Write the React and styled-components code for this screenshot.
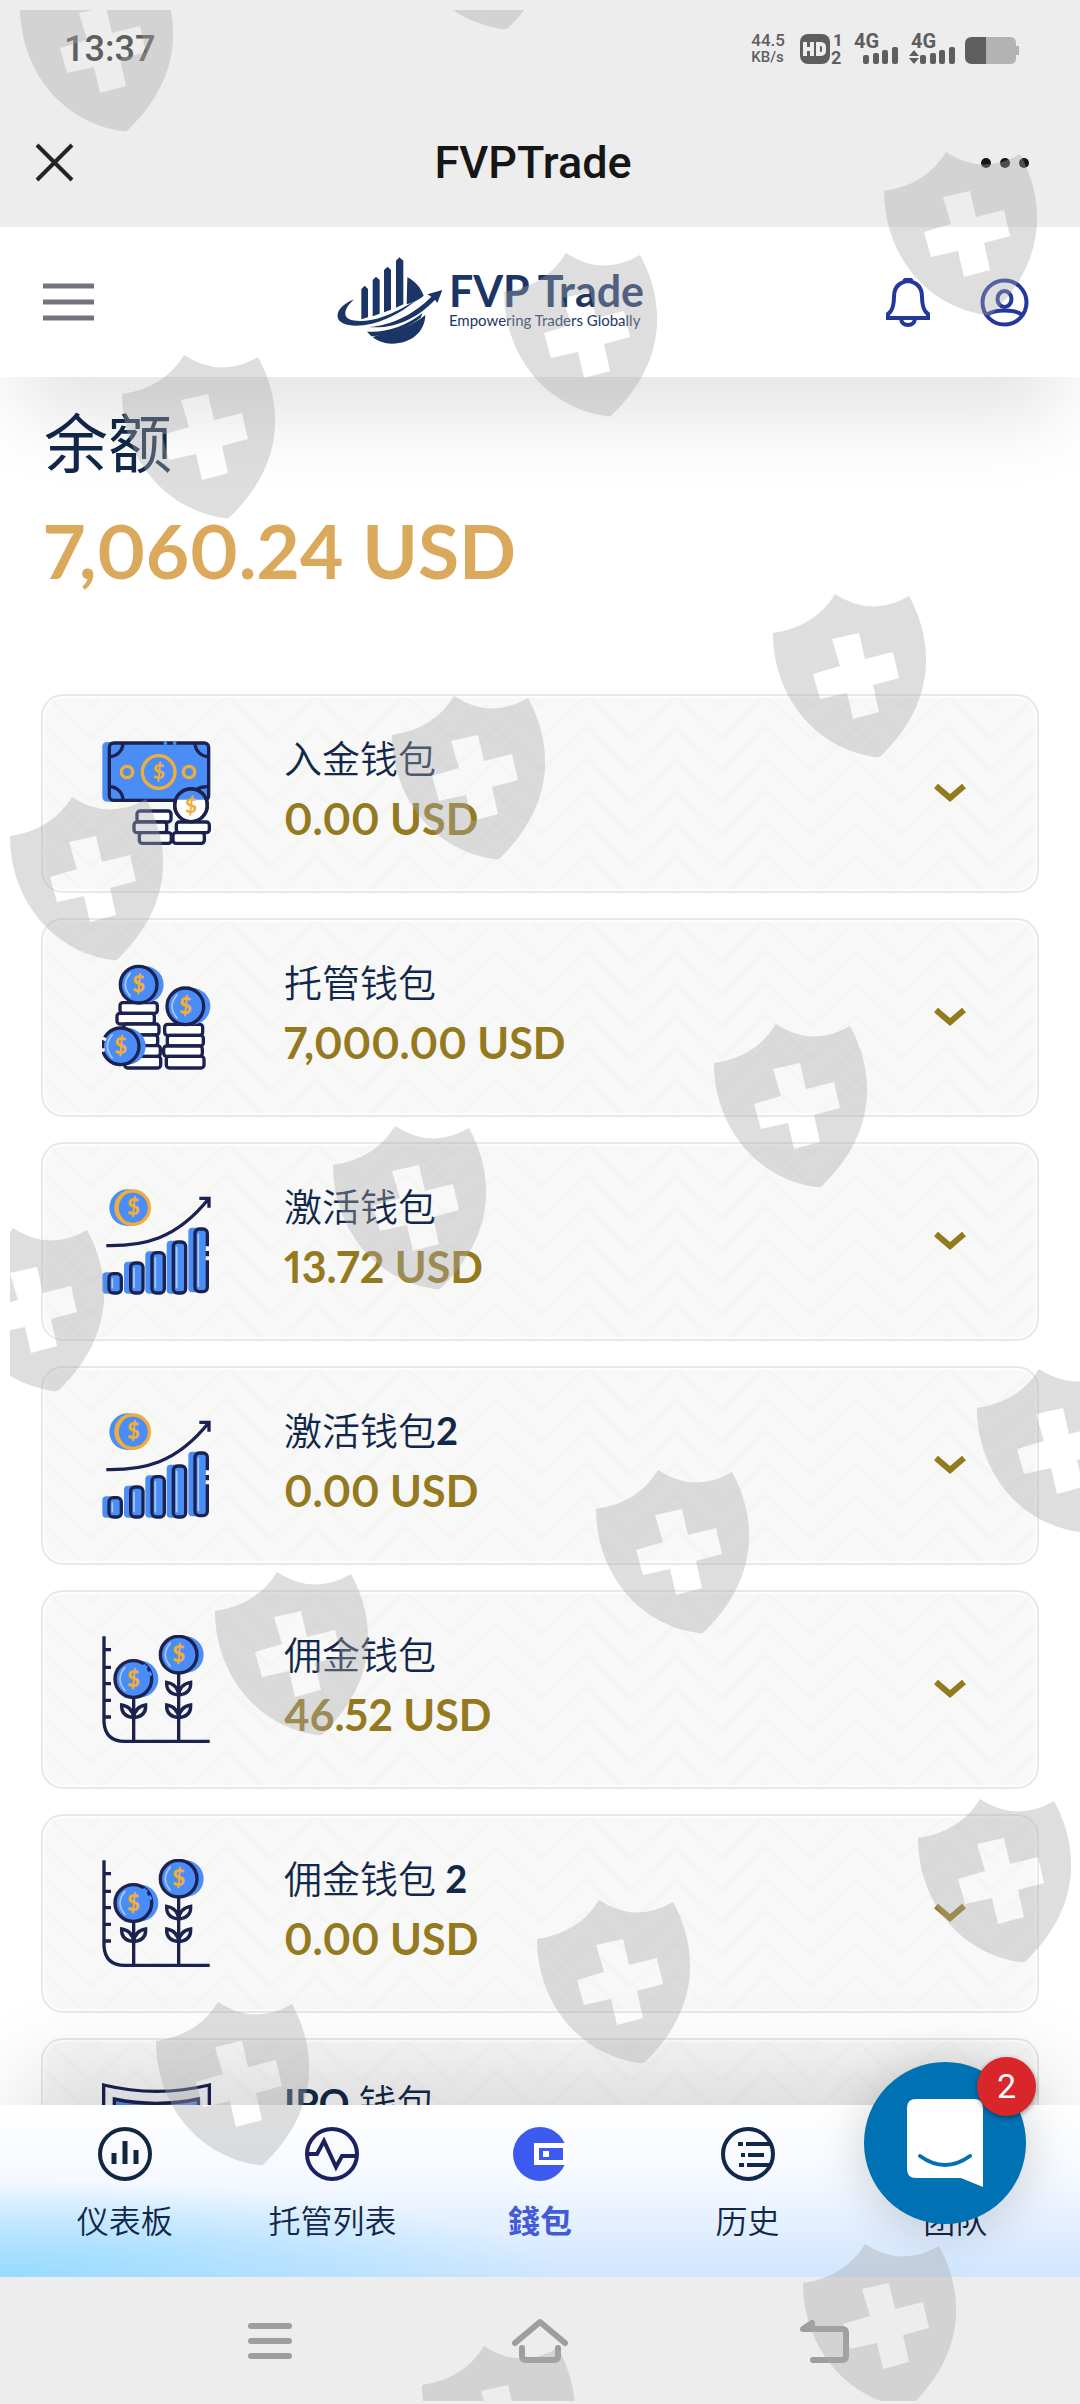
import { useState } from "react";
import styled, { createGlobalStyle, css } from "styled-components";

const NAVY = "#12284a";
const INK = "#1b2250";
const BLUE = "#4b8df6";
const AMBER = "#efae3c";
const GOLD = "#95791f";
const CJK = `"Noto Sans CJK SC", sans-serif`;

const GlobalStyle = createGlobalStyle`
  * {
    box-sizing: border-box;
  }
  body {
    margin: 0;
    background: #fff;
    font-family: "Lato", ${CJK};
    color: ${NAVY};
  }
  button {
    border: 0;
    padding: 0;
    background: none;
    font: inherit;
    color: inherit;
    cursor: pointer;
  }
  svg {
    display: block;
  }
`;

const Page = styled.div`
  position: relative;
  display: flex;
  flex-direction: column;
  height: 100vh;
  overflow: hidden;
`;

/* phone status bar and in-app browser title */

const StatusBar = styled.div`
  display: flex;
  justify-content: space-between;
  align-items: center;
  height: 98px;
  padding: 0 61px 0 64px;
  background: #ededed;
  color: #5e5e5e;
  font-family: "Roboto", sans-serif;
  font-weight: 500;
`;

const Clock = styled.time`
  font-size: 36px;
`;

const StatusIcons = styled.div`
  display: flex;
  align-items: center;
  gap: 14px;
`;

const Speed = styled.div`
  display: flex;
  flex-direction: column;
  font-size: 17px;
  line-height: 17px;
  small {
    font-size: 15px;
  }
`;

const TitleBar = styled.div`
  display: grid;
  grid-template-columns: 1fr auto 1fr;
  align-items: center;
  height: 129px;
  padding: 0 48px 0 34px;
  background: #ededed;
  color: #161616;
  font-family: "Roboto", sans-serif;
`;

const Title = styled.h1`
  margin: 0;
  font-size: 45px;
  font-weight: 500;
`;

const MoreButton = styled.button`
  justify-self: end;
`;

/* site header */

const Header = styled.header`
  position: relative;
  z-index: 2;
  display: flex;
  justify-content: space-between;
  align-items: center;
  height: 150px;
  flex-shrink: 0;
  padding: 0 51px 0 43px;
  background: #fff;
  box-shadow: 0 60px 80px -20px rgba(0, 0, 0, 0.11);
`;

const Brand = styled.a`
  display: flex;
  align-items: center;
  gap: 6px;
  padding-bottom: 4px;
  color: #1b3666;
  text-decoration: none;
`;

const BrandText = styled.span`
  display: flex;
  flex-direction: column;
  font-weight: 700;
  font-size: 43px;
  line-height: 40px;
  small {
    font-size: 15px;
    font-weight: 400;
    line-height: 18px;
  }
`;

const HeaderActions = styled.div`
  display: flex;
  gap: 50px;
`;

/* wallets */

const Main = styled.main`
  flex: 1;
  min-height: 0;
  overflow: hidden;
  padding: 24px 41px 0;
`;

const Balance = styled.section`
  padding: 0 3px;
  margin-bottom: 96px;
`;

const BalanceLabel = styled.h2`
  margin: 0;
  font-size: 64px;
  font-weight: 400;
  line-height: 84px;
`;

const BalanceAmount = styled.p`
  margin: 0;
  padding-top: 18px;
  font-size: 75px;
  font-weight: 700;
  font-variant-numeric: proportional-nums;
  line-height: 95px;
  color: #dba95c;
`;

const WalletList = styled.ul`
  display: flex;
  flex-direction: column;
  gap: 25px;
  margin: 0;
  padding: 0;
  list-style: none;
`;

const zigzag = encodeURIComponent(
  `<svg xmlns="http://www.w3.org/2000/svg" width="90" height="32"><g fill="none" stroke="#f5f5f1" stroke-width="4"><path d="M0 -22L45 -64L90 -22M0 10L45 -32L90 10M0 42L45 0L90 42M0 74L45 32L90 74"/></g></svg>`
);

const WalletCard = styled.button`
  display: flex;
  align-items: center;
  width: 100%;
  height: 199px;
  padding: 0 71px 0 59px;
  border: 2px solid #e8e8e8;
  border-radius: 22px;
  background: #f8f8f8 url("data:image/svg+xml,${zigzag}") 48px 0;
  box-shadow: inset 0 0 0 2px #fdfdfd;
  text-align: left;
`;

const WalletText = styled.span`
  flex: 1;
  display: flex;
  flex-direction: column;
  margin-left: 73px;
  padding-bottom: 10px;
`;

const WalletName = styled.span`
  font-size: 38px;
  line-height: 60px;
  font-weight: 350;
  b {
    font-weight: 700;
  }
`;

const WalletAmount = styled.span`
  font-size: 43px;
  font-weight: 700;
  line-height: 62px;
  font-variant-numeric: proportional-nums;
  color: ${GOLD};
`;

/* bottom bars */

const TabBar = styled.nav`
  position: relative;
  z-index: 2;
  display: flex;
  flex-shrink: 0;
  height: 172px;
  padding: 22px 21px 0;
  background:
    radial-gradient(ellipse 560px 96px at 0 100%, #97dbff, rgba(151, 219, 255, 0)),
    linear-gradient(#fff 0%, #f4f8ff 45%, #cfe6ff 100%);
  box-shadow: 0 -60px 80px -20px rgba(0, 0, 0, 0.11);
`;

const Tab = styled.a`
  flex: 1;
  display: flex;
  flex-direction: column;
  align-items: center;
  gap: 16px;
  font-size: 32px;
  line-height: 48px;
  font-weight: 350;
  color: ${NAVY};
  text-decoration: none;
  ${(props) =>
    props.$active &&
    css`
      font-weight: 700;
      color: #435bd6;
    `}
`;

const SystemBar = styled.div`
  display: grid;
  grid-template-columns: repeat(3, 1fr);
  flex-shrink: 0;
  align-items: center;
  justify-items: center;
  height: 127px;
  padding: 0 135px;
  background: #ededed;
`;

const ChatButton = styled.button`
  position: absolute;
  z-index: 3;
  right: 54px;
  bottom: 180px;
  width: 162px;
  height: 162px;
  border-radius: 50%;
  background: #0071b2;
  display: grid;
  place-items: center;
  box-shadow: 0 6px 50px rgba(0, 0, 0, 0.18);
`;

const ChatBadge = styled.span`
  position: absolute;
  top: -5px;
  right: -10px;
  width: 59px;
  height: 59px;
  border-radius: 50%;
  background: #d8262a;
  color: #fff;
  font-family: "Roboto", sans-serif;
  font-size: 34px;
  line-height: 59px;
  text-align: center;
  box-shadow: 0 2px 5px rgba(0, 0, 0, 0.4);
`;

const ShieldLayer = styled.div`
  position: absolute;
  z-index: 4;
  inset: 10px 0 3px 10px;
  overflow: hidden;
  pointer-events: none;
`;

/* drawings */

const SHIELDS = [
  [82, -32], [462, -134], [946, 152], [566, 253], [184, 355],
  [835, 594], [454, 696], [72, 797], [776, 1024], [395, 1126],
  [13, 1228], [1039, 1369], [658, 1470], [277, 1572], [980, 1799],
  [599, 1900], [218, 2002], [865, 2244], [484, 2346],
];

const SHIELD_PATH =
  "M0 0Q36 24 74 2C96 42 106 104 46 162Q44 164 40 163C-22 154 -62 100 -62 39Q-20 33 0 0Z" +
  "M-3 45L5 72L-22 80L-15 105L12 99L18 125L44 118L38 91L64 84L58 58L30 65L24 39Z";

const Shields = () => (
  <ShieldLayer aria-hidden="true">
    <svg width="1070" height="2392" viewBox="10 10 1070 2392">
      {SHIELDS.map(([x, y]) => (
        <path
          key={`${x}-${y}`}
          d={SHIELD_PATH}
          transform={`translate(${x} ${y})`}
          fill="#a8a8a8"
          fillOpacity="0.38"
          fillRule="evenodd"
        />
      ))}
    </svg>
  </ShieldLayer>
);

const Signals = () => (
  <svg width="220" height="56" viewBox="800 20 220 56" fill="#5e5e5e">
    <rect x="801" y="33" width="30" height="30" rx="8" />
    <g fill="none" stroke="#ededed" strokeWidth="4">
      <path d="M806 41V55M806 48H813M813 41V55" />
      <path d="M819 43H821Q825 43 825 46V50Q825 53 821 53H819Z" />
    </g>
    <g fontFamily="Roboto" fontWeight="700">
      <text x="834" y="45" fontSize="17">1</text>
      <text x="832" y="63" fontSize="18">2</text>
      <text x="855" y="47" fontSize="20">4G</text>
      <text x="912" y="47" fontSize="20">4G</text>
    </g>
    {[864, 921].map((x) => (
      <g key={x}>
        <rect x={x} y="54" width="6" height="9" rx="2" />
        <rect x={x + 10} y="52" width="6" height="11" rx="2" />
        <rect x={x + 19} y="49" width="6" height="14" rx="2" />
        <rect x={x + 29} y="46" width="6" height="17" rx="2" />
      </g>
    ))}
    <path d="M910 55L915 49L920 55ZM910 57L915 63L920 57Z" />
    <path d="M1008 36H1011Q1017 36 1017 42V45H1020V54H1017V57Q1017 63 1011 63H987V36Z" fill="#b3b3b3" />
    <path d="M987 36H973Q966 36 966 43V56Q966 63 973 63H987Z" />
  </svg>
);

const LogoMark = () => (
  <svg width="106" height="87" viewBox="55 94 318 261" fill="#1b3666">
    <path d="M128 190L138 180L148 190V275L128 281Z" />
    <path d="M162 163L172 153L183 163V264L162 272Z" />
    <path d="M196 133L207 123L217 133V252L196 260Z" />
    <path d="M232 105L242 95L254 105V236L232 246Z" />
    <path d="M266 155C290 167 306 186 315 210C304 220 288 229 264 236Z" />
    <path d="M106 221C70 236 54 256 57 275C62 300 108 306 160 294C215 280 262 250 294 222C250 248 190 284 130 286C98 287 82 280 80 266C79 252 88 238 106 221Z" />
    <path d="M150 304C220 300 290 262 338 213L326 206L371 193L356 232L349 222C300 276 225 312 150 304Z" />
    <path d="M184 327C240 317 285 296 320 268C319 318 278 354 220 354C196 354 176 346 162 334Z" />
    <path d="M145 318C200 322 262 302 312 262L306 276C268 306 226 322 176 330L158 332Z" />
  </svg>
);

const BellIcon = () => (
  <svg width="44" height="49" viewBox="0 0 44 49" fill="none" stroke="#24389a" strokeWidth="4">
    <path d="M22 3Q8 5 8 19Q8 32 2 36V40H42V36Q36 32 36 19Q36 5 22 3Z" />
    <path d="M15 41Q16 47 22 47Q28 47 29 41M18 3Q22 -1 26 3" />
  </svg>
);

const UserIcon = () => (
  <svg width="49" height="49" viewBox="0 0 49 49" fill="none" stroke="#24389a" strokeWidth="4">
    <circle cx="24.500" cy="24.500" r="22" />
    <ellipse cx="24.500" cy="21" rx="7" ry="8" />
    <path d="M7 37C14 31 35 31 42 37" />
  </svg>
);

const Dollar = ({ x, y, size = 52 }) => (
  <text
    x={x}
    y={y + size * 0.35}
    fontFamily="Lato"
    fontWeight="900"
    fontSize={size}
    textAnchor="middle"
    fill={AMBER}
    stroke="none"
  >
    $
  </text>
);

const WalletIcon = ({ top, children }) => (
  <svg
    width="109"
    height="109"
    viewBox={`217 ${top} 327 327`}
    fill="none"
    stroke={INK}
    strokeWidth="10"
    aria-hidden="true"
  >
    {children}
  </svg>
);

const Stack = ({ coins }) =>
  coins.map(([x, y, w, h]) => (
    <rect key={`${x}-${y}`} x={x} y={y} width={w} height={h} rx="9" fill="#fff" />
  ));

const CashIcon = () => (
  <WalletIcon top={178}>
    <rect x="218" y="187" width="318" height="179" rx="14" fill={BLUE} stroke="none" />
    <rect x="239" y="190" width="298" height="172" rx="13" />
    <path d="M280 190A41 41 0 0 1 239 231M496 190A41 41 0 0 0 537 231M239 321A41 41 0 0 1 280 362M500 330Q515 320 537 321" />
    <path d="M402 190H412M430 190H440" stroke={BLUE} />
    <g stroke={AMBER}>
      <circle cx="387" cy="277" r="49" />
      <circle cx="292" cy="277" r="17" />
      <circle cx="478" cy="277" r="17" />
    </g>
    <Dollar x={387} y={277} size={62} />
    <Stack
      coins={[
        [322, 394, 102, 33],
        [313, 427, 98, 32],
        [329, 459, 96, 32],
        [440, 427, 99, 32],
        [430, 459, 94, 32],
      ]}
    />
    <circle cx="484" cy="377" r="49" fill="#fff" />
    <path d="M438 360A49 49 0 0 1 530 360Z" fill={BLUE} stroke="none" />
    <circle cx="484" cy="377" r="49" />
    <Dollar x={484} y={378} size={62} />
  </WalletIcon>
);

const Coin = ({ x, y }) => (
  <g>
    <circle cx={x + 20} cy={y} r="55" fill={BLUE} stroke="none" />
    <circle cx={x} cy={y} r="55" fill={BLUE} />
    <path d={`M${x - 24} ${y - 36}Q${x - 56} ${y} ${x - 24} ${y + 36}`} stroke="#a9c9fb" strokeWidth="5" />
    <Dollar x={x} y={y} size={66} />
  </g>
);

const CoinsIcon = () => (
  <WalletIcon top={850}>
    <Stack
      coins={[
        [271, 969, 112, 32],
        [262, 1001, 112, 32],
        [282, 1033, 106, 33],
        [290, 1066, 94, 32],
        [300, 1098, 92, 32],
        [285, 1130, 108, 35],
        [405, 1034, 114, 33],
        [413, 1067, 108, 32],
        [402, 1099, 116, 31],
        [410, 1130, 113, 35],
      ]}
    />
    <Coin x={327} y={915} />
    <Coin x={467} y={980} />
    <Coin x={273} y={1100} />
    <path d="M217 1075L229 1080M217 1110L225 1112" stroke="#f8f8f8" />
  </WalletIcon>
);

const GROWTH_BARS = [
  [238, 432, 58],
  [303, 400, 90],
  [367, 369, 121],
  [431, 337, 153],
  [496, 298, 188],
];

const GrowthIcon = () => (
  <WalletIcon top={172}>
    <circle cx="294" cy="234" r="55" fill={BLUE} stroke="none" />
    <circle cx="309" cy="234" r="50" fill={BLUE} stroke={AMBER} />
    <path d="M290 186Q238 234 290 282" stroke={AMBER} strokeWidth="6" />
    <Dollar x={311} y={234} size={66} />
    <path d="M230 348C340 350 440 330 538 206M509 206H538V234" />
    {GROWTH_BARS.map(([x, y, h]) => (
      <g key={x}>
        <rect x={x - 20} y={y - 4} width="40" height={h + 6} rx="12" fill={BLUE} stroke="none" />
        <rect x={x} y={y} width="37" height={h} rx="13" fill={BLUE} />
        <path d={`M${x + 10} ${y + 14}V${y + h - 14}`} stroke="#a9c9fb" strokeWidth="5" />
      </g>
    ))}
    <path d="M533 350V364M533 380V392" stroke="#f8f8f8" />
  </WalletIcon>
);

const LEAVES = "Q-3 -32 -36 -38Q-38 -4 0 0Q3 -32 36 -38Q38 -4 0 0";

const PlantIcon = () => (
  <WalletIcon top={196}>
    <path d="M223 200V458Q227 515 285 515H540M223 240H244M223 293H244M223 342H244M223 392H244M223 442H244" />
    <path d="M312 380V515M447 308V515" />
    <path d={`M0 0${LEAVES}`} transform="translate(312 444)" />
    <path d={`M0 0${LEAVES}`} transform="translate(447 444)" />
    <path d={`M0 0${LEAVES}`} transform="translate(447 376)" />
    <Coin x={311} y={328} />
    <Coin x={447} y={255} />
    <path d="M340 286L352 296M358 306L364 318" stroke={BLUE} />
  </WalletIcon>
);

const CertificateIcon = () => (
  <WalletIcon top={0}>
    <path d="M222 6Q380 44 539 6V320H222Z" fill="#eef1f6" />
    <path d="M254 48Q380 74 506 48V290H254Z" fill={BLUE} />
    <path d="M264 90Q380 104 496 90V280H264Z" fill="#dfe7f3" stroke="none" />
  </WalletIcon>
);

const ChevronIcon = () => (
  <svg width="32" height="19" viewBox="0 0 32 19" fill="none" stroke={GOLD} strokeWidth="6">
    <path d="M2 2L16 14L30 2" />
  </svg>
);

const DashboardIcon = () => (
  <svg width="54" height="54" viewBox="0 0 54 54" fill="none" stroke="#12263f" strokeWidth="5">
    <circle cx="27" cy="27" r="25" strokeWidth="4" />
    <path d="M16 37V26M27 37V14M38 37V23" />
  </svg>
);

const PulseIcon = () => (
  <svg width="54" height="54" viewBox="0 0 54 54" fill="none" stroke="#1a2060" strokeWidth="4">
    <circle cx="27" cy="27" r="25" />
    <path d="M3 27H12L19 14L31 40L37 29H51" />
  </svg>
);

const PurseIcon = () => (
  <svg width="54" height="54" viewBox="0 0 54 54">
    <circle cx="27" cy="27" r="27" fill="#3c5af0" />
    <rect x="21" y="16" width="33" height="22" fill="#fff" />
    <rect x="26" y="21" width="24" height="12" fill="#3c5af0" />
    <rect x="30" y="24" width="6" height="6" fill="#fff" />
  </svg>
);

const HistoryIcon = () => (
  <svg width="54" height="54" viewBox="0 0 54 54" fill="none" stroke={NAVY} strokeWidth="4">
    <circle cx="27" cy="27" r="25" />
    <path d="M17 17H22M25 17H49M20 28H24M27 28H43M18 38H23M26 38H49" />
  </svg>
);

const TeamIcon = () => (
  <svg width="54" height="54" viewBox="0 0 54 54" fill="none" stroke={NAVY} strokeWidth="4">
    <circle cx="27" cy="27" r="25" />
    <circle cx="27" cy="21" r="7" />
    <path d="M13 40Q27 24 41 40" />
  </svg>
);

const ChatIcon = () => (
  <svg width="76" height="88" viewBox="0 0 76 88">
    <path d="M9 0H67Q76 0 76 9V88L54 79H9Q0 79 0 70V9Q0 0 9 0Z" fill="#fff" />
    <path d="M13 57Q38 75 63 57" fill="none" stroke="#0071b2" strokeWidth="4" strokeLinecap="round" />
  </svg>
);

const wallets = [
  { id: "deposit", name: "入金钱包", amount: "0.00 USD", Icon: CashIcon },
  { id: "custody", name: "托管钱包", amount: "7,000.00 USD", Icon: CoinsIcon },
  { id: "active", name: "激活钱包", amount: "13.72 USD", Icon: GrowthIcon },
  { id: "active2", name: "激活钱包", suffix: "2", amount: "0.00 USD", Icon: GrowthIcon },
  { id: "commission", name: "佣金钱包", amount: "46.52 USD", Icon: PlantIcon },
  { id: "commission2", name: "佣金钱包", suffix: " 2", amount: "0.00 USD", Icon: PlantIcon },
  { id: "ipo", prefix: "IPO ", name: "钱包", amount: "0.00 USD", Icon: CertificateIcon },
];

const tabs = [
  { label: "仪表板", Icon: DashboardIcon },
  { label: "托管列表", Icon: PulseIcon },
  { label: "錢包", Icon: PurseIcon },
  { label: "历史", Icon: HistoryIcon },
  { label: "团队", Icon: TeamIcon },
];

const Wallet = ({ wallet, open, onToggle }) => {
  const { Icon, prefix, name, suffix, amount } = wallet;
  return (
    <li>
      <WalletCard type="button" aria-expanded={open} onClick={onToggle}>
        <Icon />
        <WalletText>
          <WalletName>
            {prefix && <b>{prefix}</b>}
            {name}
            {suffix && <b>{suffix}</b>}
          </WalletName>
          <WalletAmount>{amount}</WalletAmount>
        </WalletText>
        <ChevronIcon />
      </WalletCard>
    </li>
  );
};

export default function App() {
  const [openId, setOpenId] = useState(null);
  const [activeTab, setActiveTab] = useState("錢包");

  return (
    <>
      <GlobalStyle />
      <Page>
        <StatusBar>
          <Clock>13:37</Clock>
          <StatusIcons>
            <Speed>
              <span>44.5</span>
              <small>KB/s</small>
            </Speed>
            <Signals />
          </StatusIcons>
        </StatusBar>
        <TitleBar>
          <button type="button" aria-label="关闭">
            <svg width="42" height="42" viewBox="0 0 42 42" stroke="#242424" strokeWidth="4">
              <path d="M3 3L38 38M38 3L3 38" />
            </svg>
          </button>
          <Title>FVPTrade</Title>
          <MoreButton type="button" aria-label="更多">
            <svg width="52" height="12" viewBox="0 0 52 12" fill="#161616">
              <circle cx="6" cy="6" r="5" />
              <circle cx="25" cy="6" r="5" />
              <circle cx="44" cy="6" r="5" />
            </svg>
          </MoreButton>
        </TitleBar>
        <Header>
          <button type="button" aria-label="菜单">
            <svg width="52" height="38" viewBox="0 0 52 38" stroke="#74747f" strokeWidth="5">
              <path d="M0 3H51M0 19H51M0 35H51" />
            </svg>
          </button>
          <Brand href="#home">
            <LogoMark />
            <BrandText>
              FVP Trade
              <small>Empowering Traders Globally</small>
            </BrandText>
          </Brand>
          <HeaderActions>
            <button type="button" aria-label="通知">
              <BellIcon />
            </button>
            <button type="button" aria-label="账户">
              <UserIcon />
            </button>
          </HeaderActions>
        </Header>
        <Main>
          <Balance>
            <BalanceLabel>余额</BalanceLabel>
            <BalanceAmount>7,060.24 USD</BalanceAmount>
          </Balance>
          <WalletList>
            {wallets.map((wallet) => (
              <Wallet
                key={wallet.id}
                wallet={wallet}
                open={openId === wallet.id}
                onToggle={() => setOpenId(openId === wallet.id ? null : wallet.id)}
              />
            ))}
          </WalletList>
        </Main>
        <TabBar>
          {tabs.map(({ label, Icon }) => (
            <Tab
              key={label}
              href="#tab"
              $active={label === activeTab}
              onClick={() => setActiveTab(label)}
            >
              <Icon />
              {label}
            </Tab>
          ))}
        </TabBar>
        <SystemBar>
          <svg width="46" height="38" viewBox="0 0 46 38" stroke="#9e9e9e" strokeWidth="6" strokeLinecap="round">
            <path d="M4 4H42M4 19H42M4 34H42" />
          </svg>
          <svg width="56" height="46" viewBox="0 0 56 46" fill="none" stroke="#9e9e9e" strokeWidth="6" strokeLinecap="round" strokeLinejoin="round">
            <path d="M3 25L28 4L53 25M10 30V38Q10 42 14 42H42Q46 42 46 38V30" />
          </svg>
          <svg width="80" height="46" viewBox="-30 0 80 46" fill="none" stroke="#9e9e9e" strokeWidth="6" strokeLinecap="round" strokeLinejoin="round">
            <path d="M16 11H42Q46 11 46 15V38Q46 42 42 42H13" />
            <path d="M3 11L12 5V11Z" />
          </svg>
        </SystemBar>
        <ChatButton type="button" aria-label="聊天">
          <ChatIcon />
          <ChatBadge>2</ChatBadge>
        </ChatButton>
        <Shields />
      </Page>
    </>
  );
}
